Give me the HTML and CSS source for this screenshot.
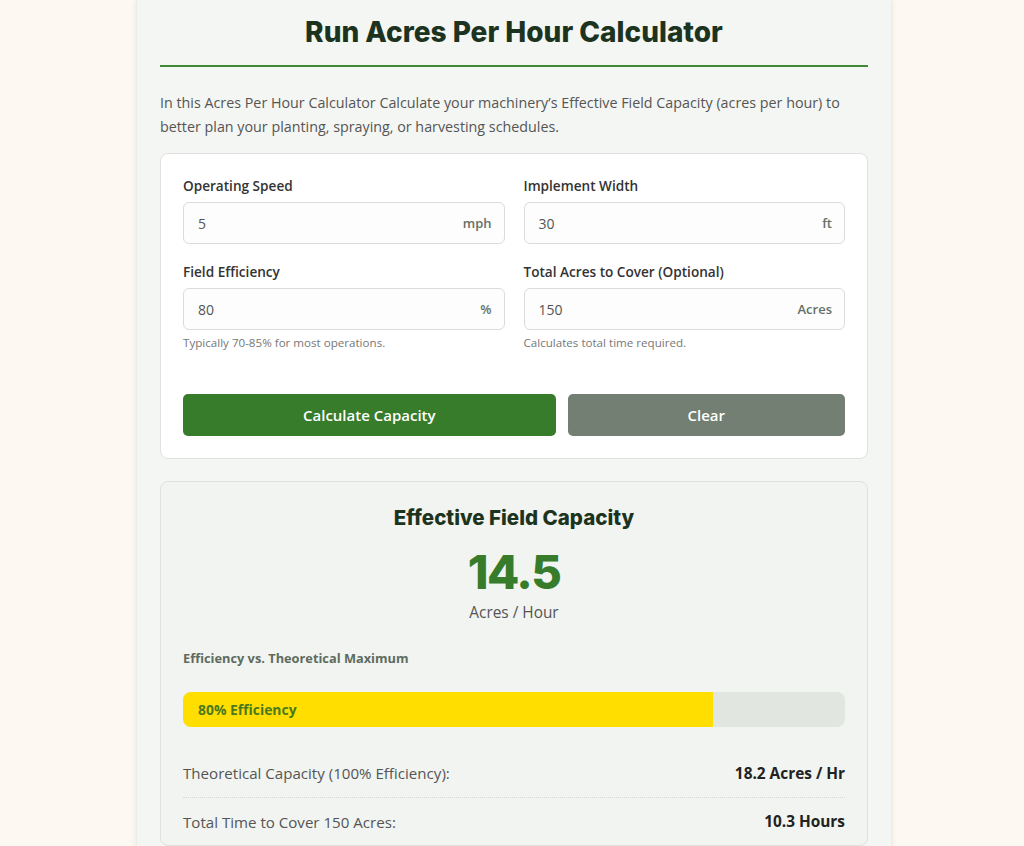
FILE: index.html
```html
<!DOCTYPE html>
<html lang="en">
<head>
<meta charset="utf-8">
<title>Run Acres Per Hour Calculator</title>
<link rel="stylesheet" href="styles.css">
</head>
<body>
<main class="wrap">
  <h1 class="title">Run Acres Per Hour Calculator</h1>
  <p class="intro">In this Acres Per Hour Calculator Calculate your machinery’s Effective Field Capacity (acres per hour) to better plan your planting, spraying, or harvesting schedules.</p>

  <section class="form-card">
    <div class="grid">
      <div class="field">
        <label class="label">Operating Speed</label>
        <div class="input"><span class="val">5</span><span class="unit">mph</span></div>
      </div>
      <div class="field">
        <label class="label">Implement Width</label>
        <div class="input"><span class="val">30</span><span class="unit">ft</span></div>
      </div>
      <div class="field">
        <label class="label">Field Efficiency</label>
        <div class="input"><span class="val">80</span><span class="unit">%</span></div>
        <p class="hint">Typically 70-85% for most operations.</p>
      </div>
      <div class="field">
        <label class="label">Total Acres to Cover (Optional)</label>
        <div class="input"><span class="val">150</span><span class="unit">Acres</span></div>
        <p class="hint">Calculates total time required.</p>
      </div>
    </div>
    <div class="buttons">
      <button class="btn btn-primary">Calculate Capacity</button>
      <button class="btn btn-secondary">Clear</button>
    </div>
  </section>

  <section class="result-card">
    <h2 class="result-title">Effective Field Capacity</h2>
    <div class="big">14.5</div>
    <div class="big-unit">Acres / Hour</div>
    <h3 class="bar-label">Efficiency vs. Theoretical Maximum</h3>
    <div class="bar"><div class="bar-fill" style="width:80%">80% Efficiency</div></div>
    <div class="row"><span class="row-k">Theoretical Capacity (100% Efficiency):</span><span class="row-v">18.2 Acres / Hr</span></div>
    <div class="row"><span class="row-k">Total Time to Cover 150 Acres:</span><span class="row-v">10.3 Hours</span></div>
  </section>
</main>
</body>
</html>
```

FILE: styles.css
```css
* { box-sizing: border-box; }
body {
  margin: 0;
  background: #fdf8f2;
  font-family: "Open Sans", "Noto Sans", sans-serif;
  color: #333;
}
.wrap {
  width: 756px;
  margin: 0 auto;
  position: relative;
  left: 2px;
  background: #f4f6f3;
  padding: 14px 23px 40px;
  box-shadow: 0 0 6px rgba(0,0,0,0.08);
  border-left: 1px solid #ecebe6;
  border-right: 1px solid #ecebe6;
}
.title {
  margin: 0;
  text-align: center;
  font-family: "Inter", sans-serif;
  font-weight: 800;
  font-size: 28px;
  line-height: 36px;
  color: #1c3320;
  padding-bottom: 15px;
  border-bottom: 2px solid #3f8a34;
}
.intro {
  margin: 24px 0 14px;
  font-size: 14.3px;
  line-height: 24px;
  color: #555;
}
.form-card {
  background: #fff;
  border: 1px solid #dfe2dd;
  border-radius: 8px;
  padding: 22px 22px 22px;
}
.grid {
  display: grid;
  grid-template-columns: 1fr 1fr;
  column-gap: 19px;
  row-gap: 18px;
}
.label {
  display: block;
  font-size: 13.6px;
  font-weight: 600;
  color: #333;
  line-height: 20px;
  margin-bottom: 6px;
}
.input {
  display: flex;
  justify-content: space-between;
  align-items: center;
  height: 42px;
  border: 1px solid #d9ddd8;
  border-radius: 6px;
  background: #fcfdfc;
  padding: 0 12px 0 14px;
}
.val {
  font-size: 14px;
  color: #555;
}
.unit {
  font-size: 13px;
  font-weight: 600;
  color: #667066;
}
.hint {
  margin: 5px 0 0;
  font-size: 11.6px;
  line-height: 16px;
  color: #777;
}
.buttons {
  display: grid;
  grid-template-columns: 372fr 277fr;
  gap: 12px;
  margin-top: 43px;
}
.btn {
  height: 42px;
  border: 0;
  border-radius: 5px;
  color: #fff;
  font-family: "Open Sans", sans-serif;
  font-size: 15px;
  font-weight: 600;
}
.btn-primary { background: #367c2b; }
.btn-secondary { background: #737f72; }
.result-card {
  margin-top: 22px;
  background: #f1f4f0;
  border: 1px solid #dde2db;
  border-radius: 8px;
  padding: 22px 22px 0;
}
.result-title {
  margin: 0;
  text-align: center;
  font-family: "Inter", sans-serif;
  font-weight: 800;
  font-size: 20.5px;
  line-height: 28px;
  color: #1c3320;
}
.big {
  text-align: center;
  font-family: "Inter", sans-serif;
  font-weight: 800;
  font-size: 47px;
  letter-spacing: -1.5px;
  line-height: 56px;
  margin-top: 12px;
  color: #367c2b;
}
.big-unit {
  text-align: center;
  margin-top: 2px;
  font-size: 15.4px;
  line-height: 22px;
  color: #555;
}
.bar-label {
  margin: 25px 0 0;
  font-size: 12.8px;
  font-weight: 700;
  line-height: 18px;
  color: #5e6b5e;
}
.bar {
  margin-top: 25px;
  height: 35px;
  background: #e2e6e0;
  border-radius: 8px;
  overflow: hidden;
}
.bar-fill {
  height: 100%;
  background: #ffde00;
  display: flex;
  align-items: center;
  padding-left: 15px;
  font-size: 13.9px;
  font-weight: 700;
  color: #4a7a1e;
}
.row {
  display: flex;
  justify-content: space-between;
  align-items: center;
  height: 48px;
  font-size: 15.1px;
}
.bar + .row { margin-top: 22px; }
.row + .row { border-top: 1px dotted #d5d9d3; }
.row-k { color: #555; }
.row-v { font-weight: 700; color: #222; font-size: 15.4px; }
```
